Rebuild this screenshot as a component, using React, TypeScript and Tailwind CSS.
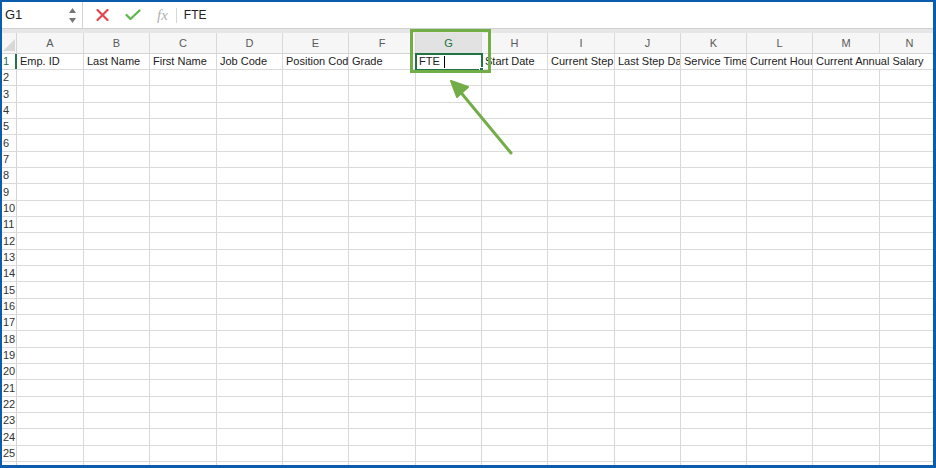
import React from 'react';

const columns = [
    { letter: 'A', w: 'w-[67px]', head: 'Emp. ID' },
    { letter: 'B', w: 'w-[66px]', head: 'Last Name' },
    { letter: 'C', w: 'w-[67px]', head: 'First Name' },
    { letter: 'D', w: 'w-[66px]', head: 'Job Code' },
    { letter: 'E', w: 'w-[66px]', head: 'Position Code' },
    { letter: 'F', w: 'w-[67px]', head: 'Grade' },
    { letter: 'G', w: 'w-[66px]', head: 'FTE' },
    { letter: 'H', w: 'w-[66px]', head: 'Start Date' },
    { letter: 'I', w: 'w-[67px]', head: 'Current Step' },
    { letter: 'J', w: 'w-[66px]', head: 'Last Step Date' },
    { letter: 'K', w: 'w-[66px]', head: 'Service Time' },
    { letter: 'L', w: 'w-[66px]', head: 'Current Hours' },
    { letter: 'M', w: 'w-[67px]', head: 'Current Annual Salary' },
    { letter: 'N', w: 'w-[60px]', head: '' },
];

const rowHeights = ['h-[16px]', 'h-[16px]', 'h-[17px]'];

export default function App() {
    const rows = Array.from({ length: 26 }, (_, i) => i + 1);

    return (
        <div className="relative w-[936px] h-[468px] overflow-hidden bg-white border-[#0b5cad] border-t-2 border-l-2 border-r-[3px] border-b-[3px] font-['Liberation_Sans',Arial,sans-serif] text-[11px] text-[#222]">
            {/* Formula bar */}
            <div className="flex items-center h-[26px] bg-white">
                <div className="flex items-center justify-between w-[81px] h-full pl-[3px] pr-[6px] border-r border-[#d4d4d4]">
                    <span className="text-[13px] text-[#222]">G1</span>
                    <div className="flex flex-col gap-[5px]">
                        <svg width="7" height="5" viewBox="0 0 7 5"><path d="M3.5 0 L7 5 L0 5 Z" fill="#777" /></svg>
                        <svg width="7" height="5" viewBox="0 0 7 5"><path d="M0 0 L7 0 L3.5 5 Z" fill="#777" /></svg>
                    </div>
                </div>
                <div className="flex items-center h-full pl-[13px]">
                    <svg width="13" height="12" viewBox="0 0 13 12">
                        <path d="M1.5 1 L11.5 11 M11.5 1 L1.5 11" stroke="#e0474c" strokeWidth="2.2" strokeLinecap="round" />
                    </svg>
                    <svg width="16" height="12" viewBox="0 0 16 12" className="ml-[16px]">
                        <path d="M1.5 6 L5.5 10 L14.5 1.5" stroke="#5cb848" strokeWidth="2.2" fill="none" strokeLinecap="round" strokeLinejoin="round" />
                    </svg>
                    <span className="ml-[16px] font-['Liberation_Serif',serif] italic text-[15px] text-[#b0b0b0] leading-none">fx</span>
                    <div className="ml-[8px] w-px h-[15px] bg-[#d8d8d8]" />
                    <span className="ml-[7px] text-[12px] text-[#222]">FTE</span>
                </div>
            </div>

            {/* separator band */}
            <div className="h-[5px] bg-[#e6e6e6] border-t border-[#d0d0d0]" />

            {/* Column headers */}
            <div className="flex h-[21px] bg-[#f6f6f6] border-b border-[#d4d4d4]">
                <div className="relative w-[15px] shrink-0 border-r border-[#d4d4d4]">
                    <svg width="12" height="12" viewBox="0 0 12 12" className="absolute right-[1px] bottom-[2px]">
                        <path d="M12 0 L12 12 L0 12 Z" fill="#d8d8d8" />
                    </svg>
                </div>
                {columns.map((c) => (
                    <div
                        key={c.letter}
                        className={`${c.w} shrink-0 flex items-center justify-center border-r border-[#d9d9d9] ${c.letter === 'G' ? 'bg-[#e2e2e2] text-[#217346]' : 'text-[#5a5a5a]'}`}
                    >
                        {c.letter}
                    </div>
                ))}
            </div>

            {/* Rows */}
            {rows.map((r, i) => (
                <div key={r} className={`flex ${rowHeights[i % 3]} border-b border-[#dadada]`}>
                    <div className={`w-[15px] shrink-0 flex items-center pl-[1px] border-r ${r === 1 ? 'border-r-2 border-[#217346] text-[#217346]' : 'border-[#d4d4d4] text-[#333]'}`}>
                        {r}
                    </div>
                    {r === 1
                        ? columns.map((c) => {
                              if (c.letter === 'N') return null;
                              if (c.letter === 'M') {
                                  return (
                                      <div key={c.letter} className="w-[127px] shrink-0 flex items-center pl-[3px] whitespace-nowrap overflow-hidden">
                                          {c.head}
                                      </div>
                                  );
                              }
                              if (c.letter === 'G') {
                                  return (
                                      <div key={c.letter} className={`${c.w} shrink-0 relative flex items-center pl-[3px] border-r border-[#d9d9d9]`}>
                                          <div className="absolute -left-[1px] -top-[1px] w-[68px] h-[18px] border-2 border-[#217346]" />
                                          <div className="absolute right-[-3px] bottom-[-3px] w-[5px] h-[5px] bg-[#217346] border border-white" />
                                          <span>{c.head}</span>
                                          <span className="ml-[4px] w-px h-[12px] bg-black" />
                                      </div>
                                  );
                              }
                              return (
                                  <div key={c.letter} className={`${c.w} shrink-0 flex items-center pl-[3px] border-r border-[#d9d9d9] whitespace-nowrap overflow-hidden`}>
                                      {c.head}
                                  </div>
                              );
                          })
                        : columns.map((c) => (
                              <div key={c.letter} className={`${c.w} shrink-0 border-r border-[#d9d9d9]`} />
                          ))}
                </div>
            ))}

            {/* Annotation box around G */}
            <div className="absolute left-[408px] top-[27px] w-[81px] h-[44px] border-[3px] border-[#72ad47]" />

            {/* Annotation arrow */}
            <svg className="absolute left-0 top-0" width="936" height="468" viewBox="0 0 936 468">
                <path d="M509 151 L456 87" stroke="#72ad47" strokeWidth="3" strokeLinecap="round" />
                <path d="M449 79 L466 85 L455 95 Z" fill="#72ad47" stroke="#72ad47" strokeWidth="2" strokeLinejoin="round" />
            </svg>
        </div>
    );
}
